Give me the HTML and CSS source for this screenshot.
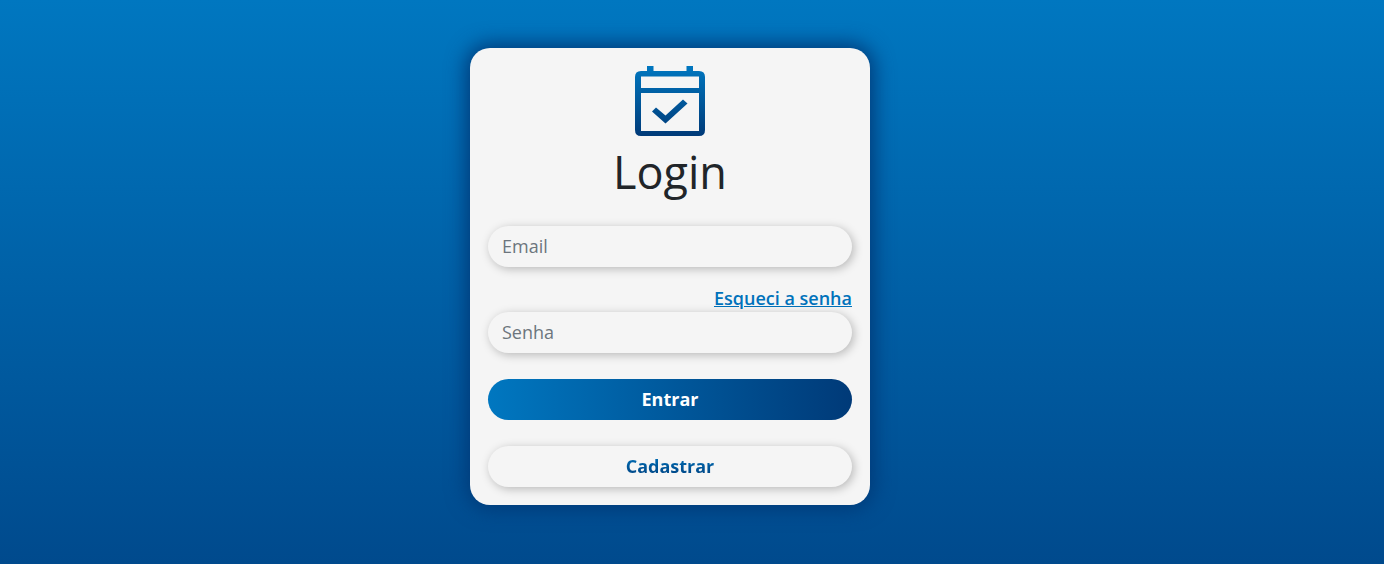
FILE: index.html
```html
<!DOCTYPE html>
<html lang="pt-BR">
<head>
<meta charset="utf-8">
<meta name="viewport" content="width=device-width, initial-scale=1">
<title>Login</title>
<link rel="stylesheet" href="styles.css">
</head>
<body>
<main class="page">
  <section class="card">
    <svg class="logo" viewBox="0 0 70 70" aria-hidden="true">
      <defs>
        <linearGradient id="brand" gradientUnits="userSpaceOnUse" x1="0" y1="0" x2="0" y2="70">
          <stop offset="0" stop-color="#0077c0"/>
          <stop offset="1" stop-color="#003a78"/>
        </linearGradient>
      </defs>
      <path fill="url(#brand)" fill-rule="evenodd" d="M12 0H18.500V5H51.500V0H58V5H64Q70 5 70 11V64Q70 70 64 70H6Q0 70 0 64V11Q0 5 6 5H12ZM6 10.500V22H64V10.500ZM6 27V65H64V27ZM21 41.500L30.500 49.500L48 33.500L52.500 37.500L30.500 57.500L17 45.500Z"/>
    </svg>
    <h1 class="title">Login</h1>
    <form class="form">
      <input class="field" type="email" placeholder="Email" aria-label="Email">
      <a class="forgot" href="#">Esqueci a senha</a>
      <input class="field" type="password" placeholder="Senha" aria-label="Senha">
      <button class="button primary" type="submit">Entrar</button>
      <button class="button secondary" type="button"><span class="gradient-text">Cadastrar</span></button>
    </form>
  </section>
</main>
</body>
</html>
```
FILE: styles.css
```css
* {
  box-sizing: border-box;
}

body {
  margin: 0;
  min-height: 100vh;
  font-family: "Open Sans", sans-serif;
  font-size: 18px;
  line-height: 27px;
  color: #212529;
  background: linear-gradient(#0077c0, #004a8d);
}

.page {
  display: flex;
  justify-content: center;
  padding: 48px 44px 48px 0;
}

.card {
  display: flex;
  flex-direction: column;
  align-items: center;
  width: 100%;
  max-width: 400px;
  padding: 18px;
  border-radius: 20px;
  background: #f5f5f5;
  box-shadow: 0 0 20px 4px #003a78;
}

.logo {
  display: block;
  width: 70px;
  height: 70px;
}

.title {
  margin: 9px 0 27px;
  font-size: 45px;
  font-weight: 400;
  line-height: 54px;
}

.form {
  display: flex;
  flex-direction: column;
  width: 100%;
}

.field,
.button {
  width: 100%;
  padding: 7px 14px;
  border: 0;
  border-radius: 21px;
  font: inherit;
  line-height: 27px;
  background: #f5f5f5;
  box-shadow: 2px 2px 10px rgba(0, 0, 0, 0.25);
}

.field {
  height: 41px;
  padding: 6px 14px 8px;
}

.field::placeholder {
  color: #6c757d;
  opacity: 1;
}

.forgot {
  align-self: flex-end;
  margin-top: 18px;
  font-weight: 600;
  color: #0072bb;
}

.button {
  margin-top: 26px;
  font-weight: 700;
}

.primary {
  color: #fff;
  background: linear-gradient(90deg, #0077c0, #003a78);
  box-shadow: none;
}

.gradient-text {
  display: block;
  color: transparent;
  background: linear-gradient(#0077c0, #003a78);
  background-clip: text;
}
```
